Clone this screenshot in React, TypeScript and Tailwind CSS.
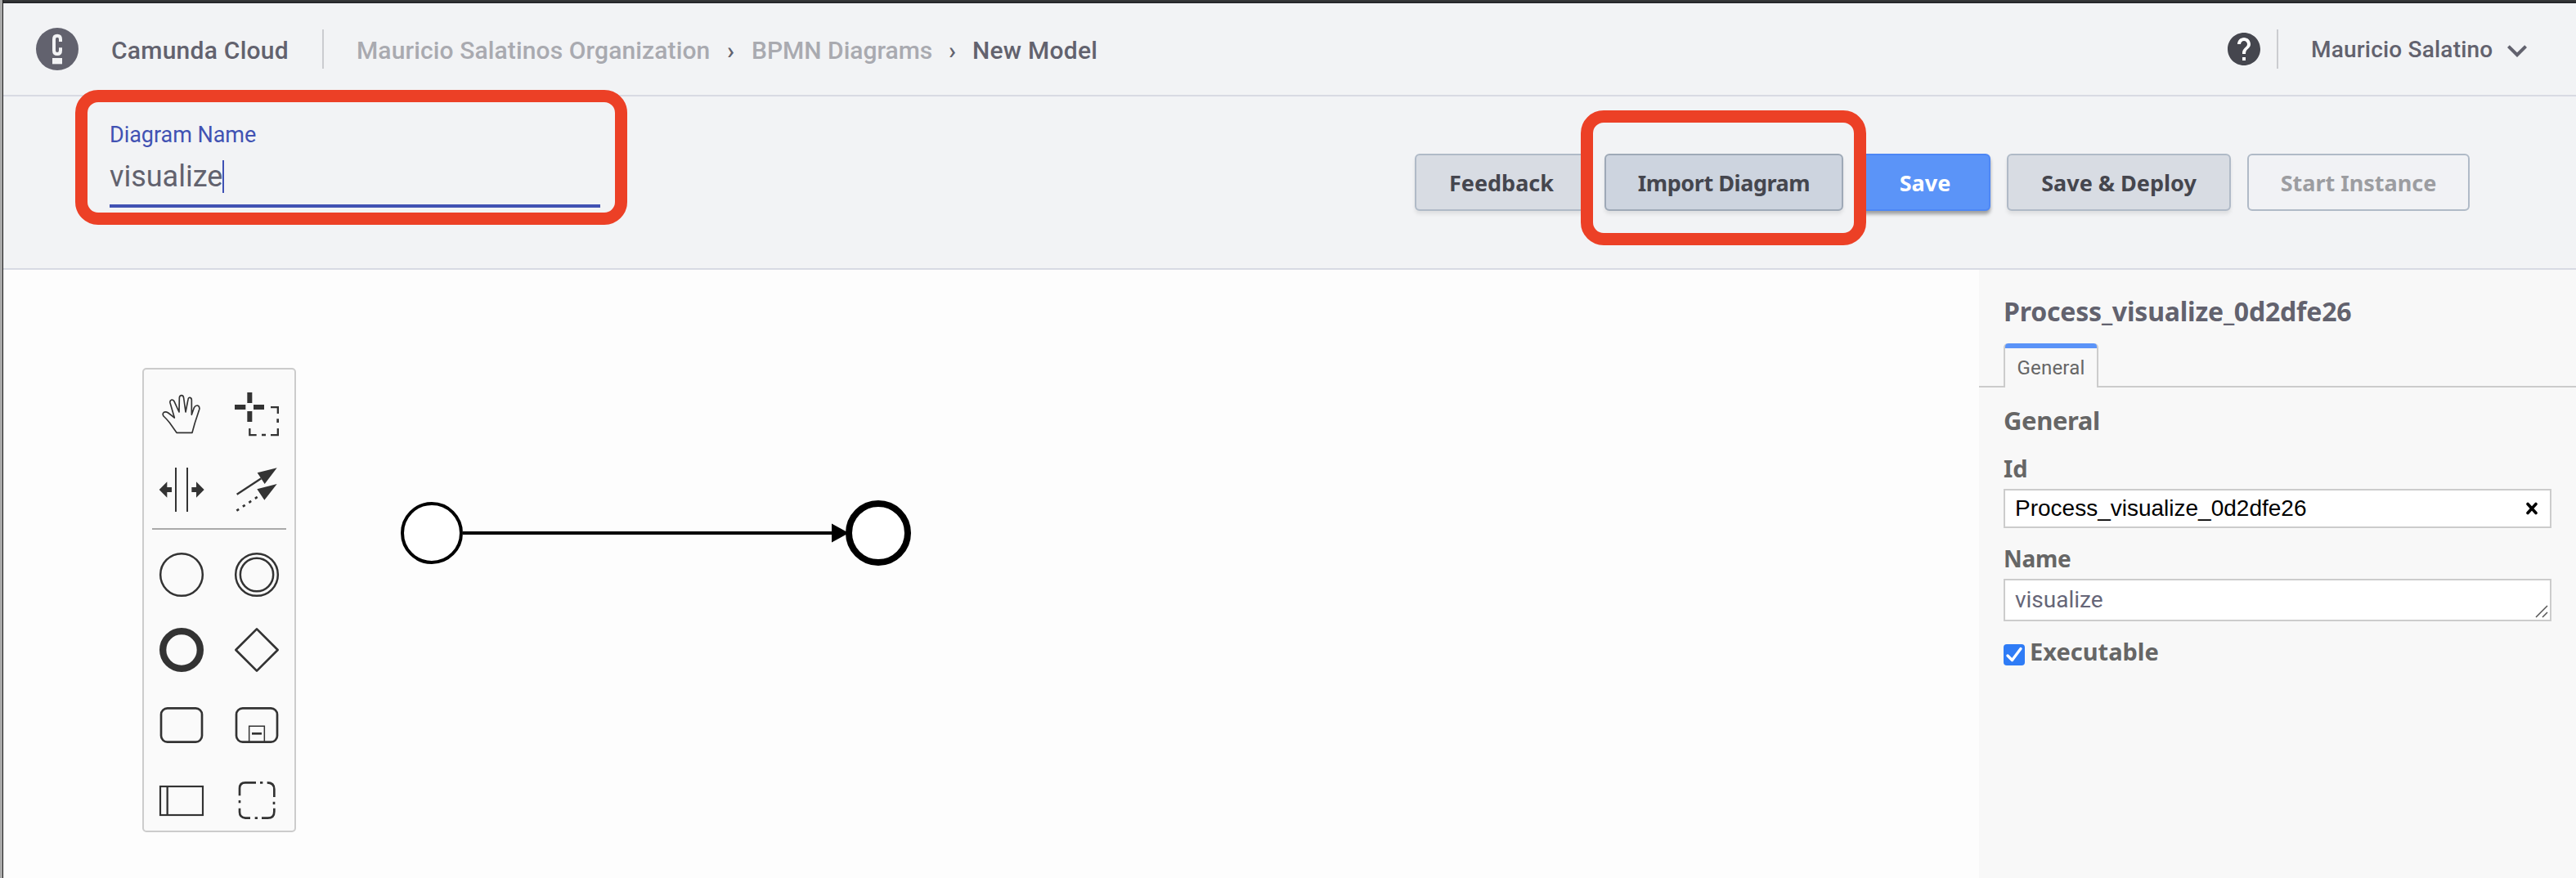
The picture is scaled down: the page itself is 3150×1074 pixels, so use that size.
import React from "react";

const UI = "font-['Roboto','Liberation_Sans',sans-serif]";
const STRONG = "font-['Noto_Sans','Open_Sans',sans-serif] font-bold";

type IconProps = { box: string; children: React.ReactNode };

function Icon({ box, children }: IconProps) {
  return (
    <svg width="92" height="92" viewBox={box} fill="none" stroke="#333333" className="block">
      {children}
    </svg>
  );
}

function Highlight({ className }: { className: string }) {
  return <div className={`pointer-events-none absolute z-20 rounded-[28px] border-[15px] border-[#ec4026] ${className}`} />;
}

function Logo() {
  return (
    <svg width="52" height="52" viewBox="132 102 156 156" className="block">
      <circle cx="210" cy="180" r="78" fill="#62626e" />
      <path
        d="M222 153V144Q222 131 210 131T198 144V185Q198 198 210 198T222 185V175"
        fill="none"
        stroke="#f2f3f5"
        strokeWidth="12"
      />
      <rect x="192" y="213" width="36" height="22" fill="#f2f3f5" />
    </svg>
  );
}

function Header() {
  return (
    <header className="flex h-[114px] items-center border-b-2 border-[#d8dae3] pl-10 text-[30px] font-medium whitespace-nowrap">
      <Logo />
      <span className="mt-[3px] ml-[40px] w-[258px] tracking-[0.25px] text-[#62626e]">Camunda Cloud</span>
      <div className="h-12 w-[2px] bg-[#cbccd0]" />
      <nav className="mt-[3px] flex text-[#a9aab0]">
        <span className="ml-[40px] w-[453px] tracking-[0.12px]">Mauricio Salatinos Organization</span>
        <span className="w-[30px] text-[#62626e]">›</span>
        <span className="w-[241px]">BPMN Diagrams</span>
        <span className="w-[29px] text-[#62626e]">›</span>
        <span className="tracking-[0.25px] text-[#62626e]">New Model</span>
      </nav>
      <div className="ml-auto flex items-center pr-[48px]">
        <svg width="48" height="48" viewBox="0 0 24 24" className="mr-4 block">
          <circle cx="12" cy="12" r="9" fill="#ffffff" />
          <path
            fill="#45464e"
            d="M12 2C6.48 2 2 6.48 2 12s4.48 10 10 10 10-4.48 10-10S17.52 2 12 2zm1 17h-2v-2h2v2zm2.07-7.75l-.9.92C13.45 12.9 13 13.5 13 15h-2v-.5c0-1.1.45-2.1 1.17-2.83l1.24-1.26c.37-.36.59-.86.59-1.41 0-1.1-.9-2-2-2s-2 .9-2 2H8c0-2.21 1.79-4 4-4s4 1.79 4 4c0 .88-.36 1.68-.93 2.25z"
          />
        </svg>
        <div className="h-12 w-[2px] bg-[#cbccd0]" />
        <span className="mt-[2px] ml-[40px] w-[228px] text-[28px] tracking-[0.2px] text-[#62626e]">Mauricio Salatino</span>
        <svg width="48" height="48" viewBox="0 0 24 24" className="mt-1 block">
          <path fill="#62626e" d="M16.59 8.59L12 13.17 7.41 8.59 6 10l6 6 6-6z" />
        </svg>
      </div>
    </header>
  );
}

function Toolbar() {
  const base = `flex h-[70px] items-center justify-center rounded-[6px] border-2 pt-[2px] text-[27px] whitespace-nowrap ${STRONG}`;
  const soft = "shadow-[0_4px_4px_rgba(0,0,0,0.08)]";
  return (
    <section className="flex h-[212px] items-start justify-between border-b-2 border-[#d8dae3] px-[130px]">
      <div className="relative mt-[30px] w-[600px]">
        <div className="h-[33px] pt-px text-[27px] leading-8 tracking-[-0.05px] text-[#4152b3]">Diagram Name</div>
        <div className="mt-[15px] flex h-10 text-[36px] leading-10 text-[#62626e]">
          <span className="w-[138px]">visualize</span>
          <span className="h-10 w-[2px] bg-[#3f51b5]" />
        </div>
        <div className="mt-[14px] h-1 bg-[#4152b3]" />
        <Highlight className="-top-[38px] -left-[42px] h-[165px] w-[675px]" />
      </div>
      <div className="mt-[70px] flex gap-5">
        <button className={`${base} ${soft} w-[212px] border-[#b0bac7] bg-[#d8dce3] text-[#45464e]`}>Feedback</button>
        <div className="relative">
          <button
            className={`${base} ${soft} w-[292px] border-[#9ea9b7] bg-[#cdd4df] tracking-[-0.45px] text-[#45464e]`}
          >
            Import Diagram
          </button>
          <Highlight className="-top-[53px] -left-[29px] h-[165px] w-[349px]" />
        </div>
        <button
          className={`${base} w-[160px] border-[#4d87f5] bg-[#5b94f8] text-white shadow-[0_4px_4px_rgba(0,0,0,0.35)]`}
        >
          Save
        </button>
        <button className={`${base} ${soft} w-[274px] border-[#b0bac7] bg-[#d8dce3] text-[#45464e]`}>
          Save &amp; Deploy
        </button>
        <button className={`${base} w-[272px] border-[#b0bac7] bg-[#f1f2f5] text-[#9c9da1]`}>Start Instance</button>
      </div>
    </section>
  );
}

function Palette() {
  return (
    <div className="h-[568px] w-[188px] rounded-[5px] border-2 border-[#cccccc] bg-[#fafafa] pt-[9px]">
      <div className="grid grid-cols-2">
        <Icon box="78 93 276 276">
          <path
            strokeWidth="5"
            strokeLinejoin="round"
            d="M198 298L172 261Q161 247 150 237Q145 230 150 224Q157 219 167 225L190 243L174 188Q172 179 180 177Q187 177 190 185L207 222L208 170Q209 161 216 161Q223 161 224 171L231 222L240 176Q241 168 247 169Q253 170 253 178V232L262 206Q267 197 275 198Q284 202 281 213L265 262L255 298Z"
          />
        </Icon>
        <Icon box="354 93 276 276">
          <g fill="#333333" stroke="none">
            <path d="M457 150h18v39h-18zM457 219h18v39h-18zM411 195h40v18h-40zM480 195h39v18h-39zM565 247h8v14h-8zM510 302h15v8h-15z" />
          </g>
          <path strokeWidth="7" d="M543 204.500H569.500V228M569.500 282V306.500H543M491 306.500H466V282" />
        </Icon>
        <Icon box="78 369 276 276">
          <path strokeWidth="6" d="M195 426V588M237 426V588" />
          <path fill="#333333" stroke="none" d="M134 507L163 478V498H180V516H163V536ZM299 507L270 478V498H253V516H270V536Z" />
        </Icon>
        <Icon box="354 369 276 276">
          <path strokeWidth="7" d="M419 524L508 466" />
          <path strokeWidth="8" strokeDasharray="10 17" d="M418 584L500 530" />
          <path fill="#333333" stroke="none" d="M566 427L494 445L521 486ZM566 486L493 505L520 545Z" />
        </Icon>
      </div>
      <div className="mx-[10px] mt-[1px] mb-[9px] h-[2px] bg-[#aaaaaa]" />
      <div className="grid grid-cols-2">
        <Icon box="78 51 276 276">
          <circle cx="216" cy="189" r="77.500" strokeWidth="7.500" />
        </Icon>
        <Icon box="354 51 276 276">
          <circle cx="492" cy="189" r="77.500" strokeWidth="7.500" />
          <circle cx="492" cy="189" r="60.500" strokeWidth="7.500" />
        </Icon>
        <Icon box="78 327 276 276">
          <circle cx="216" cy="465" r="68.500" strokeWidth="25" />
        </Icon>
        <Icon box="354 327 276 276">
          <path strokeWidth="8" strokeLinejoin="round" d="M492 388L569 465L492 542L415 465Z" />
        </Icon>
        <Icon box="78 603 276 276">
          <rect x="141" y="679" width="150" height="124" rx="23" strokeWidth="8" />
        </Icon>
        <Icon box="354 603 276 276">
          <rect x="417" y="679" width="150" height="124" rx="23" strokeWidth="8" />
          <path strokeWidth="4.500" d="M464 801V745H520V801" />
          <path strokeWidth="8" d="M474 772H510" />
        </Icon>
        <Icon box="78 879 276 276">
          <rect x="138" y="966" width="156" height="105" strokeWidth="6.500" />
          <path strokeWidth="7" d="M164 966V1071" />
        </Icon>
        <Icon box="354 879 276 276">
          <path
            strokeWidth="8"
            d="M429 1000V973Q429 952 450 952H489M504 952H514M530 952Q556 952 556 976V1005M555 1022V1032M556 1046V1058Q556 1082 532 1082H510M495 1082H485M468 1082H450Q429 1080 429 1060V1046M429 1027V1017"
          />
        </Icon>
      </div>
    </div>
  );
}

function Canvas() {
  return (
    <main className="flex w-[2416px] items-start bg-[#fdfdfd] pt-[120px] pl-[170px]">
      <Palette />
      <svg width="640" height="100" className="mt-[152px] ml-[122px] block" viewBox="484 602 640 100">
        <circle cx="528" cy="652" r="36" fill="#ffffff" stroke="#000000" strokeWidth="4" />
        <path d="M566 652H1020" stroke="#000000" strokeWidth="4" />
        <path d="M1017 640.500L1038 652L1017 663.500Z" fill="#000000" />
        <circle cx="1074" cy="652" r="36" fill="#ffffff" stroke="#000000" strokeWidth="8" />
      </svg>
    </main>
  );
}

function Properties() {
  return (
    <aside className="flex-1 bg-[#f8f8f8] pt-7 text-[#666666]">
      <h1 className={`ml-[30px] h-11 text-[32px] leading-[45px] tracking-[-0.2px] text-[#62626e] ${STRONG}`}>
        Process_visualize_0d2dfe26
      </h1>
      <div className="mt-[18px] flex h-[54px]">
        <div className="w-[30px] border-b-2 border-[#cccccc]" />
        <div className="w-[116px] rounded-t-[5px] border-x-2 border-[#cccccc]">
          <div className="h-[6px] rounded-t-[4px] bg-[#5b94f8]" />
          <div className="mt-[8px] h-8 text-center text-[24px] leading-8 tracking-[0.2px]">General</div>
        </div>
        <div className="flex-1 border-b-2 border-[#cccccc]" />
      </div>
      <div className="mr-[30px] ml-[30px]">
        <h2 className={`mt-5 h-10 text-[31px] leading-10 tracking-[-0.4px] ${STRONG}`}>General</h2>
        <div className={`mt-5 h-9 text-[29px] leading-[38px] ${STRONG}`}>Id</div>
        <div className="mt-2 flex h-12 items-center justify-between border-2 border-[#cccccc] bg-white pr-[14px] pl-3">
          <span className="font-['Liberation_Sans',sans-serif] text-[28px] text-black">Process_visualize_0d2dfe26</span>
          <svg width="16" height="16" viewBox="0 0 16 16" className="block">
            <path d="M3 2.500L13 13.500M13 2.500L3 13.500" stroke="#000000" strokeWidth="3.600" strokeLinecap="round" />
          </svg>
        </div>
        <div className={`mt-[19px] h-9 text-[28px] leading-9 tracking-[-0.3px] ${STRONG}`}>Name</div>
        <div className="mt-[7px] flex h-[52px] items-center justify-between border-2 border-[#cccccc] bg-white pr-[2px] pl-3">
          <span className="text-[28px] text-[#666678]">visualize</span>
          <svg width="16" height="16" viewBox="0 0 16 16" className="mb-[2px] block self-end">
            <path d="M1 15L15 1M9 15L15 9" stroke="#555555" strokeWidth="1.500" />
          </svg>
        </div>
        <div className="mt-[19px] flex h-9">
          <div className="mt-[9px] mr-[6px] h-[26px] w-[26px] rounded-[4px] bg-[#2f7cf6]">
            <svg width="26" height="26" viewBox="0 0 26 26" fill="none" className="block">
              <path d="M5 14L10.500 19.500L21 5.500" stroke="#ffffff" strokeWidth="3.400" strokeLinecap="round" strokeLinejoin="round" />
            </svg>
          </div>
          <span className={`text-[29px] leading-9 ${STRONG}`}>Executable</span>
        </div>
      </div>
    </aside>
  );
}

export default function App() {
  return (
    <div className={`flex h-[1074px] w-[3150px] overflow-hidden bg-[#f2f3f5] ${UI}`}>
      <div className="w-1 border-r border-[#1c1c1c] bg-[#a9a9a9]" />
      <div className="flex flex-1 flex-col">
        <div className="h-1 border-b-2 border-[#26272b] bg-[#353638]" />
        <Header />
        <Toolbar />
        <div className="flex flex-1">
          <Canvas />
          <Properties />
        </div>
      </div>
    </div>
  );
}
